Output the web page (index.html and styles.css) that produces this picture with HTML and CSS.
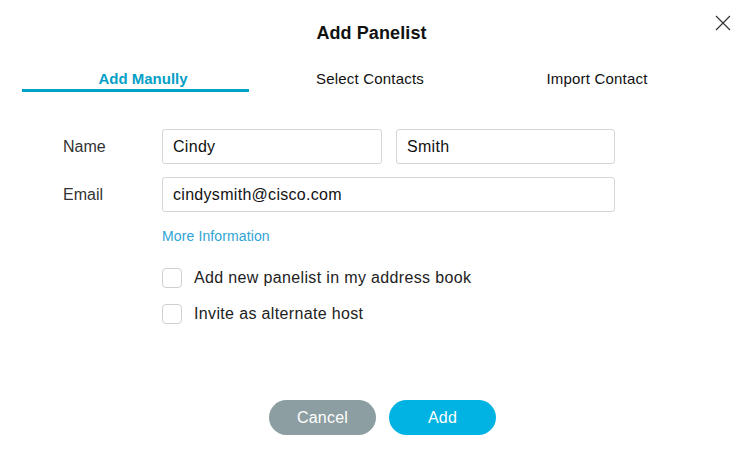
FILE: index.html
```html
<!DOCTYPE html>
<html lang="en">
<head>
<meta charset="utf-8">
<title>Add Panelist</title>
<link rel="stylesheet" href="styles.css">
</head>
<body>
<div class="dialog">
  <button class="close" aria-label="Close">
    <svg width="16" height="16" viewBox="0 0 16 16"><path d="M1 1 L15 15 M15 1 L1 15" stroke="#333" stroke-width="1.2" fill="none"/></svg>
  </button>
  <h1 class="title">Add Panelist</h1>
  <div class="tabs">
    <div class="tab active">Add Manully</div>
    <div class="tab">Select Contacts</div>
    <div class="tab">Import Contact</div>
  </div>
  <div class="form">
    <div class="row">
      <div class="label">Name</div>
      <div class="fields">
        <input class="input first" value="Cindy">
        <input class="input last" value="Smith">
      </div>
    </div>
    <div class="row row-email">
      <div class="label">Email</div>
      <div class="fields">
        <input class="input email" value="cindysmith@cisco.com">
      </div>
    </div>
    <div class="more"><a href="#" class="link">More Information</a></div>
    <label class="check check-1"><span class="box"></span><span>Add new panelist in my address book</span></label>
    <label class="check check-2"><span class="box"></span><span>Invite as alternate host</span></label>
  </div>
  <div class="actions">
    <button class="btn cancel">Cancel</button>
    <button class="btn add">Add</button>
  </div>
</div>
</body>
</html>
```

FILE: styles.css
```css
* { box-sizing: border-box; }
html, body { margin: 0; padding: 0; background: #fff; }
body {
  font-family: "Liberation Sans", Arial, Helvetica, sans-serif;
  color: #222;
  width: 743px;
  height: 466px;
  overflow: hidden;
}
.dialog { position: relative; padding-top: 22px; }
.close {
  position: absolute;
  top: 15px;
  left: 715px;
  width: 16px;
  height: 16px;
  padding: 0;
  border: 0;
  background: none;
}
.close svg { display: block; }
.title {
  margin: 0;
  font-size: 18px;
  line-height: 22px;
  font-weight: bold;
  text-align: center;
  color: #111;
  letter-spacing: 0.1px;
}
.tabs {
  display: flex;
  margin: 25px 0 0 22px;
  width: 681px;
}
.tab {
  flex: 0 0 227px;
  padding-left: 15px;
  text-align: center;
  font-size: 15px;
  letter-spacing: 0.2px;
  line-height: 20px;
  color: #111;
  border-bottom: 3px solid transparent;
}
.tab.active {
  color: #049fc6;
  font-weight: bold;
  letter-spacing: 0;
  border-bottom-color: #00a1c7;
}
.form { padding-left: 63px; margin-top: 37px; }
.row { display: flex; align-items: center; }
.row-email { margin-top: 13px; }
.label {
  width: 99px;
  font-size: 16px;
  color: #333;
}
.fields { display: flex; gap: 14px; }
.input {
  height: 35px;
  border: 1px solid #d6d6d6;
  border-radius: 3px;
  padding: 0 10px;
  font-family: inherit;
  font-size: 16px;
  letter-spacing: 0.3px;
  color: #111;
  outline: none;
}
.first { width: 220px; }
.last { width: 219px; }
.email { width: 453px; }
.more { margin: 15px 0 0 99px; line-height: 18px; }
.link { color: #2ea4d6; font-size: 14px; letter-spacing: 0.12px; text-decoration: none; }
.check {
  display: flex;
  align-items: center;
  margin-left: 99px;
  font-size: 16px;
  line-height: 20px;
  color: #222;
  letter-spacing: 0.35px;
}
.check-1 { margin-top: 23px; }
.check-2 { margin-top: 16px; }
.box {
  width: 20px;
  height: 20px;
  border: 1px solid #d0d0d0;
  border-radius: 4px;
  margin-right: 12px;
  flex: 0 0 20px;
}
.actions {
  display: flex;
  justify-content: center;
  gap: 13px;
  margin-top: 76px;
  padding-left: 22px;
}
.btn {
  width: 107px;
  height: 35px;
  border: 0;
  border-radius: 18px;
  color: #fff;
  font-family: inherit;
  font-size: 16px;
  letter-spacing: 0.2px;
}
.cancel { background: #8c9ea1; }
.add { background: #00b3e3; }
```
